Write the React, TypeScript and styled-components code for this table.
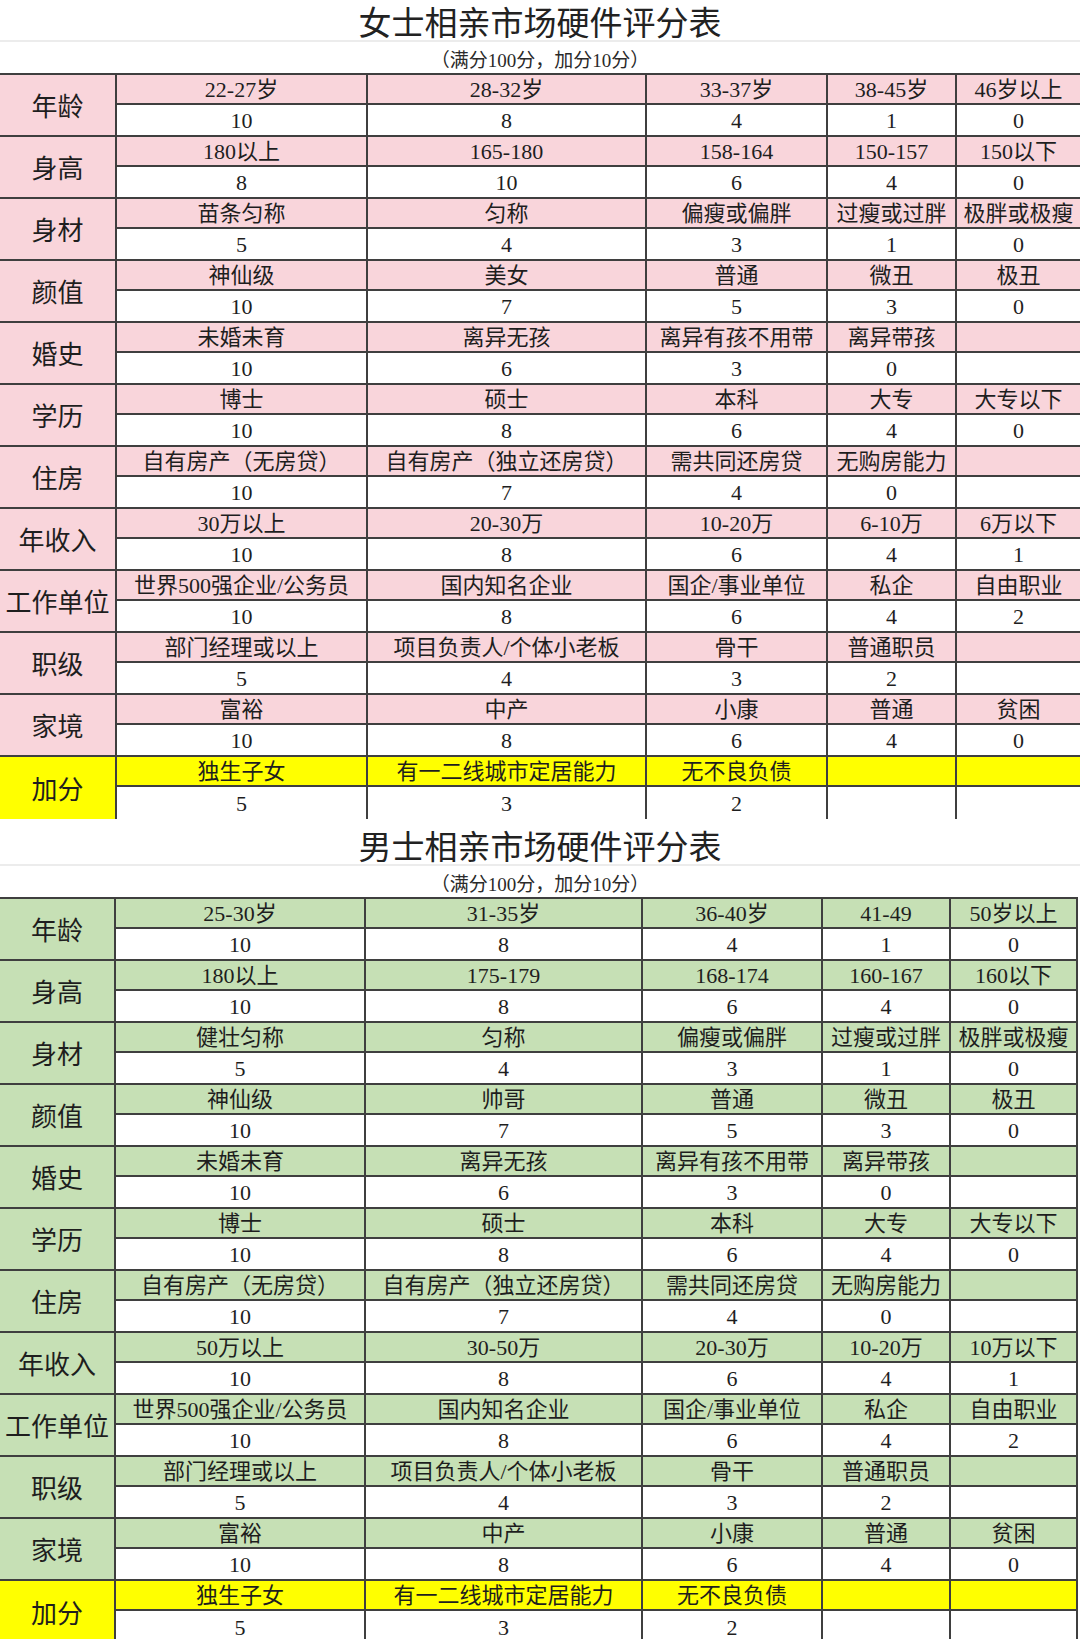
import React from 'react';
import styled, { createGlobalStyle } from 'styled-components';

const GlobalStyle = createGlobalStyle`
  body {
    margin: 0;
    background: #ffffff;
    color: #1e1e1e;
    font-family: "Liberation Serif", "Noto Sans CJK SC", serif;
  }
`;

const PINK = '#f9d5db';
const GREEN = '#c6e0b5';
const YELLOW = '#ffff00';
const LINE = '#3f3f3f';

const Page = styled.div`
  width: 1080px;
  height: 1639px;
  overflow: hidden;
  background: #ffffff;
`;

const Title = styled.h1<{ $gap?: number }>`
  margin: 0;
  box-sizing: border-box;
  height: ${(p) => 42 + (p.$gap || 0)}px;
  padding-top: ${(p) => 2 + (p.$gap || 0)}px;
  line-height: 38px;
  text-align: center;
  font-family: "Noto Sans CJK SC", sans-serif;
  font-size: 33px;
  font-weight: 400;
  color: #222222;
  border-bottom: 2px solid #ececec;
`;

const Subtitle = styled.div`
  box-sizing: border-box;
  height: 31px;
  padding-top: 6px;
  line-height: 25px;
  text-align: center;
  font-size: 19px;
  color: #2a2a2a;
`;

const Sheet = styled.div<{ $cols: string; $width: number }>`
  display: grid;
  width: ${(p) => p.$width}px;
  grid-template-columns: ${(p) => p.$cols};
  grid-template-rows: repeat(12, 30px 32px);
  border-top: 2px solid ${LINE};
`;

const Label = styled.div<{ $bg: string; $closed: boolean }>`
  grid-row: span 2;
  box-sizing: border-box;
  display: flex;
  align-items: center;
  justify-content: center;
  background: ${(p) => p.$bg};
  border-right: 2px solid ${LINE};
  border-bottom: ${(p) => (p.$closed ? `2px solid ${LINE}` : 'none')};
  font-family: "Noto Sans CJK SC", sans-serif;
  font-size: 26px;
  line-height: 1;
  white-space: nowrap;
`;

const Cell = styled.div<{ $bg: string; $edge: boolean; $closed: boolean }>`
  box-sizing: border-box;
  display: flex;
  align-items: center;
  justify-content: center;
  padding-top: 1px;
  background: ${(p) => p.$bg};
  border-right: ${(p) => (p.$edge ? `2px solid ${LINE}` : 'none')};
  border-bottom: ${(p) => (p.$closed ? `2px solid ${LINE}` : 'none')};
  font-size: 22px;
  line-height: 1;
  white-space: nowrap;
  overflow: hidden;
`;

type Group = { label: string; heads: string[]; scores: string[] };

const shared = {
  marriage: { label: '婚史', heads: ['未婚未育', '离异无孩', '离异有孩不用带', '离异带孩', ''], scores: ['10', '6', '3', '0', ''] },
  degree: { label: '学历', heads: ['博士', '硕士', '本科', '大专', '大专以下'], scores: ['10', '8', '6', '4', '0'] },
  housing: { label: '住房', heads: ['自有房产（无房贷）', '自有房产（独立还房贷）', '需共同还房贷', '无购房能力', ''], scores: ['10', '7', '4', '0', ''] },
  employer: { label: '工作单位', heads: ['世界500强企业/公务员', '国内知名企业', '国企/事业单位', '私企', '自由职业'], scores: ['10', '8', '6', '4', '2'] },
  rank: { label: '职级', heads: ['部门经理或以上', '项目负责人/个体小老板', '骨干', '普通职员', ''], scores: ['5', '4', '3', '2', ''] },
  family: { label: '家境', heads: ['富裕', '中产', '小康', '普通', '贫困'], scores: ['10', '8', '6', '4', '0'] },
  bonus: { label: '加分', heads: ['独生子女', '有一二线城市定居能力', '无不良负债', '', ''], scores: ['5', '3', '2', '', ''] },
};

const women: Group[] = [
  { label: '年龄', heads: ['22-27岁', '28-32岁', '33-37岁', '38-45岁', '46岁以上'], scores: ['10', '8', '4', '1', '0'] },
  { label: '身高', heads: ['180以上', '165-180', '158-164', '150-157', '150以下'], scores: ['8', '10', '6', '4', '0'] },
  { label: '身材', heads: ['苗条匀称', '匀称', '偏瘦或偏胖', '过瘦或过胖', '极胖或极瘦'], scores: ['5', '4', '3', '1', '0'] },
  { label: '颜值', heads: ['神仙级', '美女', '普通', '微丑', '极丑'], scores: ['10', '7', '5', '3', '0'] },
  shared.marriage,
  shared.degree,
  shared.housing,
  { label: '年收入', heads: ['30万以上', '20-30万', '10-20万', '6-10万', '6万以下'], scores: ['10', '8', '6', '4', '1'] },
  shared.employer,
  shared.rank,
  shared.family,
  shared.bonus,
];

const men: Group[] = [
  { label: '年龄', heads: ['25-30岁', '31-35岁', '36-40岁', '41-49', '50岁以上'], scores: ['10', '8', '4', '1', '0'] },
  { label: '身高', heads: ['180以上', '175-179', '168-174', '160-167', '160以下'], scores: ['10', '8', '6', '4', '0'] },
  { label: '身材', heads: ['健壮匀称', '匀称', '偏瘦或偏胖', '过瘦或过胖', '极胖或极瘦'], scores: ['5', '4', '3', '1', '0'] },
  { label: '颜值', heads: ['神仙级', '帅哥', '普通', '微丑', '极丑'], scores: ['10', '7', '5', '3', '0'] },
  shared.marriage,
  shared.degree,
  shared.housing,
  { label: '年收入', heads: ['50万以上', '30-50万', '20-30万', '10-20万', '10万以下'], scores: ['10', '8', '6', '4', '1'] },
  shared.employer,
  shared.rank,
  shared.family,
  shared.bonus,
];

interface ScoreSheetProps {
  groups: Group[];
  tint: string;
  cols: string;
  width: number;
  framed?: boolean;
}

const ScoreSheet: React.FC<ScoreSheetProps> = ({ groups, tint, cols, width, framed }) => (
  <Sheet $cols={cols} $width={width}>
    {groups.map((g, gi) => {
      const last = gi === groups.length - 1;
      const fill = g.label === '加分' ? YELLOW : tint;
      return (
        <React.Fragment key={g.label}>
          <Label $bg={fill} $closed={!last}>{g.label}</Label>
          {g.heads.map((h, i) => (
            <Cell key={'h' + i} $bg={fill} $edge={!!framed || i < 4} $closed>
              {h}
            </Cell>
          ))}
          {g.scores.map((s, i) => (
            <Cell key={'s' + i} $bg="#ffffff" $edge={!!framed || i < 4} $closed={!last}>
              {s}
            </Cell>
          ))}
        </React.Fragment>
      );
    })}
  </Sheet>
);

const App: React.FC = () => (
  <Page>
    <GlobalStyle />
    <Title>女士相亲市场硬件评分表</Title>
    <Subtitle>（满分100分，加分10分）</Subtitle>
    <ScoreSheet
      groups={women}
      tint={PINK}
      cols="117px 251px 279px 181px 129px 123px"
      width={1080}
    />
    <Title $gap={5}>男士相亲市场硬件评分表</Title>
    <Subtitle>（满分100分，加分10分）</Subtitle>
    <ScoreSheet
      groups={men}
      tint={GREEN}
      cols="116px 250px 277px 180px 128px 127px"
      width={1078}
      framed
    />
  </Page>
);

export default App;
